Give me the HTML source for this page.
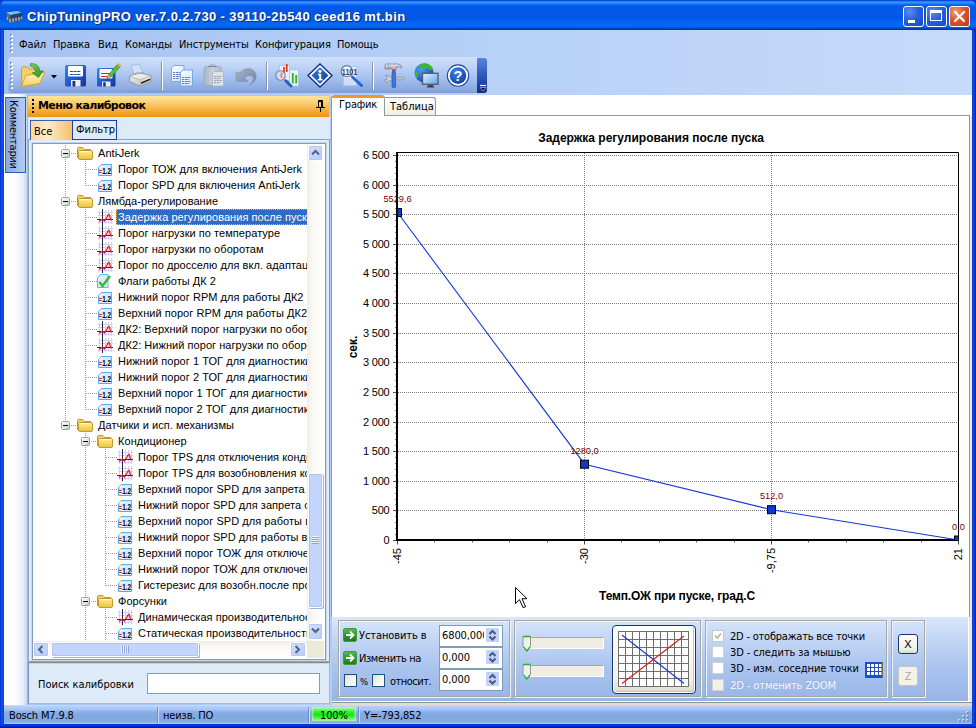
<!DOCTYPE html>
<html lang="ru"><head><meta charset="utf-8"><title>ChipTuningPRO</title>
<style>
*{box-sizing:border-box;margin:0;padding:0}
html,body{width:976px;height:728px;overflow:hidden}
body{position:relative;background:#0937dc;font-family:"Liberation Sans","DejaVu Sans",sans-serif;font-size:11px;color:#000}
.a{position:absolute}
.t{position:absolute;white-space:nowrap;line-height:1}
#titlebar{left:0;top:0;width:976px;height:30px;background:linear-gradient(to bottom,#0a48d4 0%,#0a4cd8 3%,#3b97ff 6%,#2f8cfd 10%,#0a6df6 15%,#0359e7 21%,#0256e4 60%,#035ff0 70%,#0568f6 80%,#0565f2 89%,#0452dc 93%,#033cbc 96%,#022f9f 100%);border-radius:7px 7px 0 0}
#title{left:27px;top:10px;font-family:"Liberation Sans",sans-serif;font-weight:bold;font-size:13px;color:#fff;text-shadow:1px 1px 1px #0a2a80;letter-spacing:0.37px}
#client{left:4px;top:30px;width:968px;height:694px;background:linear-gradient(to right,#a4c2f2 0%,#b4cef6 40%,#c6dbf9 100%)}
.wb{position:absolute;top:6px;width:21px;height:21px;border:1px solid #fff;border-radius:3px;background:radial-gradient(circle at 30% 25%,#5c8cf5 0%,#2a5fe0 45%,#1a46c4 100%)}
.wb.c{background:radial-gradient(circle at 30% 25%,#f0a080 0%,#e05a30 40%,#c2330f 100%)}
</style></head><body>
<div id="titlebar" class="a"></div>
<svg class="a" style="left:5px;top:10px" width="18" height="14" viewBox="0 0 18 14">
<defs><linearGradient id="chg" x1="0" y1="0" x2="1" y2="1"><stop offset="0" stop-color="#e8f6ff"/><stop offset=".45" stop-color="#7cc0f0"/><stop offset="1" stop-color="#2f86d8"/></linearGradient></defs>
<path d="M1.500 3L13 1.500 17 3.500V7L5.500 9 1.500 6.500z" fill="#1b2b4a"/>
<path d="M1.500 2.500L13 1 17 3 5.500 5.200z" fill="url(#chg)"/>
<path d="M1.500 2.500L5.500 5.200V8.500L1.500 6z" fill="#3d78c0"/>
<path d="M5.500 5.200L17 3V6.500L5.500 8.500z" fill="#22406e"/>
<path d="M2.500 6.500v3.500M5 8.500v4M8 8v4M11 7.500v3.500M14 7v3.500M16.500 6.500v2.500" stroke="#f0a01c" stroke-width="1.500"/>
</svg>
<div id="title" class="t">ChipTuningPRO ver.7.0.2.730 - 39110-2b540 ceed16 mt.bin</div>
<div class="wb" style="left:903px"><div class="a" style="left:4px;top:13px;width:7px;height:3px;background:#fff"></div></div>
<div class="wb" style="left:926px"><div class="a" style="left:3px;top:3px;width:12px;height:11px;border:1px solid #fff;border-top-width:3px"></div></div>
<div class="wb c" style="left:949px"><svg class="a" style="left:0;top:0" width="19" height="19"><path d="M5 5L14 14M14 5L5 14" stroke="#fff" stroke-width="2.2" stroke-linecap="round"/></svg></div>
<div class="a" style="left:0;top:30px;width:4px;height:698px;background:linear-gradient(to right,#0a2ac4 0%,#0a4fe8 35%,#0a4ce6 70%,#0a3cd6 100%)"></div>
<div class="a" style="left:972px;top:30px;width:4px;height:698px;background:linear-gradient(to right,#0a3cd6 0%,#0a48e2 40%,#0a30c8 75%,#001a9c 100%)"></div>
<div class="a" style="left:0;top:724px;width:976px;height:4px;background:linear-gradient(to bottom,#0a3ce2 0%,#0a34d6 40%,#0522b0 75%,#00108a 100%)"></div>
<div id="client" class="a"></div>
<style>
.grip{position:absolute;width:3px}
.grip i{position:absolute;left:0;width:2px;height:2px;background:#fff;box-shadow:-1px -1px 0 #6a8ccc}
.mi{top:39px;font-size:11px;color:#000;font-family:"DejaVu Sans Condensed","Liberation Sans",sans-serif;letter-spacing:-0.1px}
#tbar{left:8px;top:57px;width:469px;height:36px;border-radius:4px 0 0 4px;background:linear-gradient(to bottom,#cfe0fa 0%,#bcd2f6 30%,#a3bfee 60%,#8daae2 88%,#7f9cd8 100%)}
#tbend{left:477px;top:58px;width:10px;height:35px;border-radius:0 3px 3px 0;background:linear-gradient(to bottom,#5b84dc 0%,#2f57b8 50%,#0f2f8c 100%)}
.sep{position:absolute;top:62px;width:1px;height:28px;background:#8f91a4;box-shadow:1px 0 0 #fdfdfb}
.ic{position:absolute}
</style>
<!-- menu grip -->
<div class="grip" style="left:11px;top:34px;height:22px"><i style="top:1px"></i><i style="top:5px"></i><i style="top:9px"></i><i style="top:13px"></i><i style="top:17px"></i></div>
<div class="t mi" style="left:19px">Файл</div>
<div class="t mi" style="left:53px">Правка</div>
<div class="t mi" style="left:98px">Вид</div>
<div class="t mi" style="left:125px">Команды</div>
<div class="t mi" style="left:179px">Инструменты</div>
<div class="t mi" style="left:255px">Конфигурация</div>
<div class="t mi" style="left:337px">Помощь</div>
<div id="tbar" class="a"></div><div id="tbend" class="a"></div>
<div class="grip" style="left:11px;top:62px;height:28px"><i style="top:1px"></i><i style="top:5px"></i><i style="top:9px"></i><i style="top:13px"></i><i style="top:17px"></i><i style="top:21px"></i><i style="top:25px"></i></div>
<div class="sep" style="left:161px"></div><div class="sep" style="left:266px"></div><div class="sep" style="left:372px"></div>
<!-- TOOLBAR ICONS -->
<!--ICONS-->
<!-- open -->
<svg class="ic" style="left:20px;top:63px" width="26" height="25" viewBox="20 63 26 25">
<defs><linearGradient id="fo1" x1="0" y1="0" x2="0" y2="1"><stop offset="0" stop-color="#fdf3b8"/><stop offset="1" stop-color="#f5d26a"/></linearGradient>
<linearGradient id="ga1" x1="0" y1="0" x2="1" y2="1"><stop offset="0" stop-color="#7fd862"/><stop offset="1" stop-color="#1f8f1a"/></linearGradient></defs>
<path d="M21.500 86V68.500q0-1.500 1.500-1.500h5l1.800 2.300H38v5" fill="#f4cf6a" stroke="#d99a22" stroke-width="1"/>
<path d="M21.500 86.500L25.500 75.500 44.500 72 40 83.500z" fill="url(#fo1)" stroke="#e0a024" stroke-width="1"/>
<path d="M30.500 63.800c5.500-.8 8.800 2.500 9.300 7.600l3.400-.6-4.800 6.700-6-4.700 3.400-.6c-.4-3.400-2.300-5.600-5.300-6.200z" fill="url(#ga1)" stroke="#1c7d18" stroke-width=".7"/>
</svg>
<svg class="ic" style="left:51px;top:75px" width="6" height="4"><path d="M0 0h6L3 3.500z" fill="#000"/></svg>
<!-- save -->
<svg class="ic" style="left:64px;top:63px" width="24" height="25" viewBox="64 63 24 25">
<defs><linearGradient id="sv1" x1="0" y1="0" x2="1" y2="1"><stop offset="0" stop-color="#3a86ee"/><stop offset=".5" stop-color="#1f5bd0"/><stop offset="1" stop-color="#16348e"/></linearGradient></defs>
<rect x="65" y="65" width="21" height="21.500" rx="1.800" fill="url(#sv1)"/>
<rect x="68" y="66" width="15" height="10.500" rx="1.200" fill="#fff"/>
<path d="M70 71.500h11M70 74.500h11" stroke="#27479a" stroke-width="1" stroke-dasharray="3 .6"/>
<rect x="71" y="80" width="9.500" height="6.500" fill="#e9edf8"/>
<rect x="72.500" y="81" width="2.800" height="5.500" fill="#1d2f80"/>
</svg>
<!-- save edit -->
<svg class="ic" style="left:96px;top:63px" width="26" height="25" viewBox="96 63 26 25">
<rect x="97" y="68" width="18.500" height="18.500" rx="1.600" fill="url(#sv1)"/>
<rect x="99.500" y="69" width="13" height="9.500" rx="1" fill="#fff"/>
<path d="M101 73.500h9.500M101 76.500h9.500" stroke="#e2241c" stroke-width="1.200"/>
<rect x="102" y="81.500" width="8.500" height="5" fill="#e9edf8"/>
<rect x="103.200" y="82.300" width="2.500" height="4.200" fill="#1d2f80"/>
<path d="M108.300 74.800L117 64.800l2.800 2.300L111 77.200z" fill="#4cc238" stroke="#2a8a20" stroke-width=".6"/>
<path d="M117 64.800l1.300-1.400 2.800 2.300-1.300 1.400z" fill="#f4ae34" stroke="#c9821a" stroke-width=".4"/>
<path d="M108.300 74.800l-1.300 3.600 4-1.200z" fill="#f0cc90" stroke="#8a6a3a" stroke-width=".4"/>
<path d="M107 78.400l.5-1.400 1 .9z" fill="#222"/>
</svg>
<!-- print -->
<svg class="ic" style="left:128px;top:63px" width="25" height="25" viewBox="128 63 25 25">
<defs><linearGradient id="pr1" x1="0" y1="0" x2="0" y2="1"><stop offset="0" stop-color="#f6f6f4"/><stop offset="1" stop-color="#c9c9c4"/></linearGradient></defs>
<path d="M131 65.200l8.500-.9 3.700 8.400-9 2.300z" fill="#cfe1f9" stroke="#8fb0e0" stroke-width=".7"/>
<path d="M129.500 76.200l8-3.600 13.500 3v5.600l-11 5-10.500-4.600z" fill="url(#pr1)" stroke="#8b8b86" stroke-width=".8"/>
<path d="M129.500 76.200l10.500 4 11-4.600M140 80.200v6" fill="none" stroke="#a9a9a4" stroke-width=".7"/>
<path d="M134.500 74.700l9-2.200" stroke="#9a9a95" stroke-width=".8"/>
<path d="M141 82.300l9.300-3.900v1.600L141 84z" fill="#1c1c1c"/>
</svg>
<!-- copy -->
<svg class="ic" style="left:170px;top:63px" width="24" height="25" viewBox="170 63 24 25">
<defs><linearGradient id="cp1" x1="0" y1="0" x2="1" y2="1"><stop offset="0" stop-color="#fff"/><stop offset="1" stop-color="#cfe2fa"/></linearGradient></defs>
<path d="M171.500 68l2.500-2.500h10v16h-12.500z" fill="url(#cp1)" stroke="#78a8e6" stroke-width="1"/>
<path d="M173 72.500h8M173 74.500h7M173 76.500h8M173 78.500h6" stroke="#4462b0" stroke-width=".8" stroke-dasharray="2 .7 3 .5"/>
<path d="M180.500 72.500l2.500-2.500h9.500v16h-12z" fill="url(#cp1)" stroke="#78a8e6" stroke-width="1"/>
<path d="M182 77.500h9M182 79.500h7M182 81.500h9M182 83.500h7" stroke="#4462b0" stroke-width=".8" stroke-dasharray="2 .7 3 .5"/>
</svg>
<!-- paste (disabled) -->
<svg class="ic" style="left:202px;top:63px" width="24" height="25" viewBox="202 63 24 25">
<defs><linearGradient id="ps1" x1="0" y1="0" x2="1" y2="0"><stop offset="0" stop-color="#aab4c6"/><stop offset=".5" stop-color="#c9d0dc"/><stop offset="1" stop-color="#b4bccb"/></linearGradient></defs>
<path d="M204 68.500q0-2 2-2h2.500q1-2 4-2t4 2H219q2 0 2 2V85.500H204z" fill="url(#ps1)" stroke="#98a3b8" stroke-width=".7"/>
<path d="M208.500 66.500h8" stroke="#7f8ba3" stroke-width="1.200"/>
<path d="M212.500 73.500l2-2h9v14.500h-11z" fill="#dde1e9" stroke="#a9b2c3" stroke-width=".8"/>
<path d="M214 76.500h8M214 78.500h6.500M214 80.500h8M214 82.500h6.500" stroke="#9aa5b8" stroke-width="1" stroke-dasharray="2 .6 3 .5"/>
</svg>
<!-- undo (disabled) -->
<svg class="ic" style="left:234px;top:63px" width="24" height="25" viewBox="234 63 24 25">
<defs><linearGradient id="un1" x1="0" y1="0" x2="1" y2="1"><stop offset="0" stop-color="#aab6c8"/><stop offset=".6" stop-color="#8594ac"/><stop offset="1" stop-color="#6f8098"/></linearGradient></defs>
<path d="M236 72v9.500h12l-3.600-3.500c3-3 7-3 8.500-.5 1.300 2.300-.5 5-3.400 7.500 5.500-2.500 8-7.500 6-12-2.300-5-10-6.500-15.500 -.5z" fill="url(#un1)" stroke="#7d8ca6" stroke-width=".5"/>
</svg>
<!-- chart zoom -->
<svg class="ic" style="left:274px;top:63px" width="26" height="25" viewBox="274 63 26 25">
<rect x="279.500" y="65.500" width="10" height="15" fill="#eaf1fb" stroke="#a9c2e6" stroke-width=".8"/>
<rect x="289.500" y="70" width="9" height="16" fill="#eef4fc" stroke="#a9c2e6" stroke-width=".8"/>
<path d="M284 73v-6M286.800 72v-8" stroke="#e63a1e" stroke-width="1.700"/>
<path d="M292.800 83.500V73M296.200 83.500V75" stroke="#35b428" stroke-width="1.900"/>
<circle cx="280.500" cy="75.500" r="4.700" fill="#dfe7f3" fill-opacity=".7" stroke="#6f82a6" stroke-width="1.100"/>
<path d="M281.500 72.500v5.500" stroke="#e2705c" stroke-width="2.200" opacity=".75"/>
<path d="M284.500 79.500l1.500 1.500" stroke="#e05030" stroke-width="2"/>
<path d="M286 81l5 5" stroke="#1f62cc" stroke-width="3" stroke-linecap="round"/>
</svg>
<!-- info -->
<svg class="ic" style="left:307px;top:63px" width="26" height="25" viewBox="307 63 26 25">
<defs><linearGradient id="in1" x1="0" y1="0" x2="1" y2="1"><stop offset="0" stop-color="#2f7ae0"/><stop offset="1" stop-color="#123f9c"/></linearGradient></defs>
<path d="M320 64L332 75.500 320 87 308 75.500z" fill="#fff" stroke="#152f86" stroke-width="1.400"/>
<path d="M320 67.300L328.500 75.500 320 83.700 311.500 75.500z" fill="url(#in1)"/>
<circle cx="320" cy="71.300" r="1.600" fill="#fff"/>
<path d="M318 73.800h3.200v5.300h1.300v1.400h-4.800v-1.400h1.500v-3.900H318z" fill="#fff"/>
</svg>
<!-- binary zoom -->
<svg class="ic" style="left:339px;top:63px" width="26" height="25" viewBox="339 63 26 25">
<rect x="343.500" y="66.500" width="13" height="19" fill="#e8f0fb" stroke="#a9c2e6" stroke-width=".8"/>
<rect x="344" y="78" width="12" height="7" fill="#d0ddf3"/>
<circle cx="346.800" cy="71.200" r="5.600" fill="#eef3fb" fill-opacity=".85" stroke="#62749e" stroke-width="1.100"/>
<text x="341.800" y="74.600" font-family="Liberation Sans,sans-serif" font-size="9" font-weight="bold" fill="#34446f" textLength="15.500" lengthAdjust="spacingAndGlyphs">1101</text>
<path d="M351.200 75.800l1.600 1.500" stroke="#e24a2c" stroke-width="2.300"/>
<path d="M353 77.500l8.500 8" stroke="#1f6ad2" stroke-width="3" stroke-linecap="round"/>
</svg>
<!-- tools -->
<svg class="ic" style="left:382px;top:63px" width="24" height="25" viewBox="382 63 24 25">
<defs><linearGradient id="tl1" x1="0" y1="0" x2="0" y2="1"><stop offset="0" stop-color="#eceef2"/><stop offset="1" stop-color="#9aa0ae"/></linearGradient></defs>
<path d="M385 65.500q0-1.500 1.500-1.500H397c2.500 0 4.200 1 5 3.200l-1.200.8c-1.200-1.300-2.500-1.600-4-1.300l-1 3h-4l-.8-2H390v1.300h-5z" fill="url(#tl1)" stroke="#6d7486" stroke-width=".7"/>
<path d="M388.500 64v5" stroke="#8a90a0" stroke-width=".7"/>
<rect x="392" y="69.700" width="3.600" height="2.300" fill="#e23a2a"/>
<rect x="392" y="72" width="3.600" height="15.500" rx="1" fill="#3a7ada" stroke="#1d4c9e" stroke-width=".6"/>
<path d="M396.200 77.200h7.300q1.200 0 1.200 1.300t-1.200 1.300h-7.300z" fill="#c4c8d0" stroke="#7d8392" stroke-width=".6"/>
<path d="M391.500 77h-1.800c-.6-1.400-2.300-2-4.200-1.600l1.900 2-.5 2.200-2.600.5c.8 1.800 3.400 2.200 5.200.4h2z" fill="#d3d6dd" stroke="#7d8392" stroke-width=".7"/>
</svg>
<!-- globe + monitor -->
<svg class="ic" style="left:413px;top:62px" width="27" height="27" viewBox="413 62 27 27">
<defs><radialGradient id="gl1" cx=".35" cy=".3" r=".8"><stop offset="0" stop-color="#4f9cf2"/><stop offset="1" stop-color="#1245b8"/></radialGradient>
<linearGradient id="mn1" x1="0" y1="0" x2="1" y2="1"><stop offset="0" stop-color="#e4f2fe"/><stop offset="1" stop-color="#5aa6ee"/></linearGradient></defs>
<circle cx="424" cy="72.800" r="9.500" fill="url(#gl1)"/>
<path d="M418.500 66c2.500-2 5.500-2.800 8.500-2.200 3 .8 5.200 2.800 6.300 5.500l-3.500 1-2.300-2.500-2.700 1.500-2.500-1.800-2.500 1z" fill="#3ab82f"/>
<path d="M415 70.500c1.800.3 3 1.600 3.300 3.300.3 1.800-.8 3-1.300 4.700-1.500-2-2.600-5-2-8z" fill="#3ab82f"/>
<rect x="422.500" y="73.300" width="15.500" height="11" fill="url(#mn1)" stroke="#5a5e68" stroke-width="1.400"/>
<path d="M426.500 87.500h8l-1.800-2.600h-4.400z" fill="#3c404a"/>
</svg>
<!-- help -->
<svg class="ic" style="left:446px;top:63px" width="25" height="25" viewBox="446 63 25 25">
<defs><radialGradient id="hp1" cx=".4" cy=".3" r=".8"><stop offset="0" stop-color="#3a86ea"/><stop offset="1" stop-color="#0f3a9a"/></radialGradient></defs>
<circle cx="458" cy="75.600" r="10.700" fill="#fff" stroke="#1a47a6" stroke-width="1.100"/>
<circle cx="458" cy="75.600" r="8.300" fill="url(#hp1)"/>
<text x="458" y="80.800" text-anchor="middle" font-family="Liberation Sans,sans-serif" font-weight="bold" font-size="14.500" fill="#fff">?</text>
</svg>
<!-- toolbar end chevron -->
<svg class="ic" style="left:479px;top:84px" width="8" height="8"><path d="M1 1.500h6" stroke="#fff" stroke-width="1.200"/><path d="M1.500 3.500h5.500L4.200 7z" fill="#000" stroke="#fff" stroke-width=".5"/></svg>
<style>
#vtab{left:5px;top:97px;width:21px;height:76px;background:linear-gradient(to right,#89a8e0,#b5cbf2);border:1px solid #2a56c0;border-left:1px solid #3a66d0}
#vtabtxt{left:8px;top:100px;writing-mode:vertical-rl;font-size:11px;font-family:"DejaVu Sans Condensed","Liberation Sans",sans-serif;letter-spacing:-0.25px}
#lgut{left:4px;top:174px;width:24px;height:531px;background:linear-gradient(to right,#fff 0%,#fff 45%,#e6eefa 78%,#c6d9f5 95%,#7c9cd8 100%)}
#lgut0{left:4px;top:94px;width:24px;height:80px;background:linear-gradient(to right,#fff 0%,#fff 45%,#e6eefa 78%,#c6d9f5 95%,#7c9cd8 100%)}
#phead{left:28px;top:96px;width:301px;height:21px;background:linear-gradient(to bottom,#fde59a 0%,#fbd278 28%,#f6b548 60%,#f09c1e 88%,#ee940f 100%)}
#pheadt{left:38px;top:100px;font-weight:bold;font-size:11px;font-family:"DejaVu Sans","Liberation Sans",sans-serif;letter-spacing:-0.6px}
#pbody{left:28px;top:117px;width:302px;height:546px;background:#dcebf7}
#tabAll{left:30px;top:120px;width:42px;height:20px;background:linear-gradient(to right,#fbd999 0%,#fdeccb 40%,#f6c06a 100%);border:1px solid #3d5cb8;border-bottom:none;border-right:none}
#tabF{left:72px;top:120px;width:45px;height:20px;background:#dcebf7;border:1px solid #1c3fa8}
#treeout{left:28px;top:139px;width:302px;height:523px;border:1px solid #8aa6c6;border-right:1px solid #7f9db9;background:#e3eefa}
#treein{left:32px;top:143px;width:294px;height:517px;border:1px solid #7f9db9;background:#fff;box-shadow:0 0 0 1px #c5d8ef}
#tree{left:33px;top:145px;width:274px;height:496px;overflow:hidden}
.tr{position:absolute;height:16px;line-height:17px;padding:0 2px;white-space:nowrap;font-size:11px;font-family:"Liberation Sans",sans-serif;letter-spacing:0.05px}
.tr.sel{background:#316ac5;color:#fff;outline:1px dotted #e8b060;outline-offset:-1px;width:300px}
.ti{position:absolute}
.pm{position:absolute;width:9px;height:9px;border:1px solid #8da0bb;border-radius:1.500px;background:linear-gradient(135deg,#fff 0%,#e4e4dc 60%,#c3c1b4 100%)}
.pm:after{content:"";position:absolute;left:1px;top:3px;width:5px;height:1px;background:#000}
.vl{position:absolute;width:1px;background:repeating-linear-gradient(to bottom,#9c9c9c 0 1px,transparent 1px 2px)}
.hl{position:absolute;height:1px;background:repeating-linear-gradient(to right,#9c9c9c 0 1px,transparent 1px 2px)}
.sbtn{position:absolute;width:15px;height:15px;border:1px solid #fff;border-radius:2px;background:linear-gradient(135deg,#d3e0fd,#b7cbf8);box-shadow:0 0 0 1px #b4c8f6 inset}
#vtrack{left:307px;top:145px;width:17px;height:496px;background:linear-gradient(to right,#efede4,#fbfaf6 40%,#fefefb)}
#htrack{left:33px;top:641px;width:274px;height:17px;background:linear-gradient(to bottom,#efede4,#fbfaf6 40%,#fefefb)}
#corner{left:307px;top:641px;width:17px;height:17px;background:#ece9d8}
.thumb{position:absolute;border:1px solid #fff;border-radius:2px;background:#c3d5fd;box-shadow:0 0 0 1px #b0c4f2 inset,1px 1px 0 #9db2e0}
#search{left:28px;top:662px;width:302px;height:42px;background:#dcebf7;border:1px solid #c4b69a;border-top:1px solid #8c8c84;border-left:1px solid #7a94c4;box-shadow:inset 0 1px 0 #c9d3dc}
</style>
<div id="lgut0" class="a"></div><div id="lgut" class="a"></div>
<div id="vtab" class="a"></div><div id="vtabtxt" class="t">Комментарии</div>
<div id="phead" class="a"></div>
<div class="grip" style="left:32px;top:99px;height:16px"><i style="top:0;background:#000;box-shadow:none"></i><i style="top:4px;background:#000;box-shadow:none"></i><i style="top:8px;background:#000;box-shadow:none"></i><i style="top:12px;background:#000;box-shadow:none"></i></div>
<div id="pheadt" class="t">Меню калибровок</div>
<svg class="a" style="left:315px;top:99px" width="11" height="14"><path d="M3.500 8.500V1.500h4v7M1 8.500h9M5.500 9v4" stroke="#000" stroke-width="1" fill="none"/><path d="M6.500 2v6M4 2.500h3" stroke="#000" stroke-width="1"/></svg>
<div id="pbody" class="a"></div>
<div id="treeout" class="a"></div>
<div id="tabAll" class="a"></div><div class="t" style="left:34px;top:126px;font-size:11px;font-family:'DejaVu Sans Condensed','Liberation Sans',sans-serif">Все</div>
<div id="tabF" class="a"></div><div class="t" style="left:76px;top:124px;font-size:11px;font-family:'DejaVu Sans Condensed','Liberation Sans',sans-serif">Фильтр</div>
<div id="treein" class="a"></div>
<svg width="0" height="0" style="position:absolute"><defs>
<linearGradient id="gf" x1="0" y1="0" x2="0" y2="1"><stop offset="0" stop-color="#fdee9c"/><stop offset="1" stop-color="#eac23c"/></linearGradient>
</defs></svg>
<div id="tree" class="a">
<div class="vl" style="left:32px;top:0;height:281px"></div>
<div class="vl" style="left:52px;top:16px;height:25px"></div>
<div class="vl" style="left:52px;top:64px;height:201px"></div>
<div class="vl" style="left:52px;top:288px;height:208px"></div>
<div class="vl" style="left:72px;top:304px;height:137px"></div>
<div class="vl" style="left:72px;top:464px;height:32px"></div>
<div class="hl" style="left:38px;top:8px;width:6px"></div>
<div class="hl" style="left:38px;top:56px;width:6px"></div>
<div class="hl" style="left:38px;top:280px;width:6px"></div>
<div class="hl" style="left:53px;top:24px;width:11px"></div>
<div class="hl" style="left:53px;top:40px;width:11px"></div>
<div class="hl" style="left:53px;top:72px;width:11px"></div>
<div class="hl" style="left:53px;top:88px;width:11px"></div>
<div class="hl" style="left:53px;top:104px;width:11px"></div>
<div class="hl" style="left:53px;top:120px;width:11px"></div>
<div class="hl" style="left:53px;top:136px;width:11px"></div>
<div class="hl" style="left:53px;top:152px;width:11px"></div>
<div class="hl" style="left:53px;top:168px;width:11px"></div>
<div class="hl" style="left:53px;top:184px;width:11px"></div>
<div class="hl" style="left:53px;top:200px;width:11px"></div>
<div class="hl" style="left:53px;top:216px;width:11px"></div>
<div class="hl" style="left:53px;top:232px;width:11px"></div>
<div class="hl" style="left:53px;top:248px;width:11px"></div>
<div class="hl" style="left:53px;top:264px;width:11px"></div>
<div class="hl" style="left:58px;top:296px;width:6px"></div>
<div class="hl" style="left:58px;top:456px;width:6px"></div>
<div class="hl" style="left:73px;top:312px;width:11px"></div>
<div class="hl" style="left:73px;top:328px;width:11px"></div>
<div class="hl" style="left:73px;top:344px;width:11px"></div>
<div class="hl" style="left:73px;top:360px;width:11px"></div>
<div class="hl" style="left:73px;top:376px;width:11px"></div>
<div class="hl" style="left:73px;top:392px;width:11px"></div>
<div class="hl" style="left:73px;top:408px;width:11px"></div>
<div class="hl" style="left:73px;top:424px;width:11px"></div>
<div class="hl" style="left:73px;top:440px;width:11px"></div>
<div class="hl" style="left:73px;top:472px;width:11px"></div>
<div class="hl" style="left:73px;top:488px;width:11px"></div>
<i class="pm" style="left:28px;top:4px"></i>
<svg class="ti" style="left:44px;top:2px" width="17" height="14"><path d="M.5 11V1.800q0-1.300 1.300-1.300h3.400q1 0 1.600 1l.7 1h5.500q1 0 1 1v1" fill="#f2d35c" stroke="#c49a22" stroke-width="1"/><rect x="1.500" y="3.500" width="14" height="9" rx="1.300" fill="url(#gf)" stroke="#c49a22"/><path d="M2.500 4.500h12" stroke="#fff6c4" stroke-width="1"/></svg>
<div class="tr" id="r1" style="left:63px;top:0px">Anti<span style="margin:0 -1px 0 -1.200px">-</span>Jerk</div>
<svg class="ti" style="left:65px;top:19px" width="14" height="12"><path d="M3.500 .5h10v11h-13v-8z" fill="#d9ecfd" stroke="#55acf2"/><path d="M1 3.500h2.500v-2.500z" fill="#fff"/><path d="M1 6.500h2.700M1 8.500h2.700" stroke="#f01c10" stroke-width="1"/><text x="4.300" y="9.600" font-family="Liberation Sans,sans-serif" font-weight="bold" font-size="8.800" fill="#000" textLength="8.800" lengthAdjust="spacingAndGlyphs">1.2</text></svg>
<div class="tr" id="r2" style="left:83px;top:16px">Порог ТОЖ для включения Anti<span style="margin:0 -1px 0 -1.200px">-</span>Jerk</div>
<svg class="ti" style="left:65px;top:35px" width="14" height="12"><path d="M3.500 .5h10v11h-13v-8z" fill="#d9ecfd" stroke="#55acf2"/><path d="M1 3.500h2.500v-2.500z" fill="#fff"/><path d="M1 6.500h2.700M1 8.500h2.700" stroke="#f01c10" stroke-width="1"/><text x="4.300" y="9.600" font-family="Liberation Sans,sans-serif" font-weight="bold" font-size="8.800" fill="#000" textLength="8.800" lengthAdjust="spacingAndGlyphs">1.2</text></svg>
<div class="tr" id="r3" style="left:83px;top:32px">Порог SPD для включения Anti<span style="margin:0 -1px 0 -1.200px">-</span>Jerk</div>
<i class="pm" style="left:28px;top:52px"></i>
<svg class="ti" style="left:44px;top:50px" width="17" height="14"><path d="M.5 11V1.800q0-1.300 1.300-1.300h3.400q1 0 1.600 1l.7 1h5.500q1 0 1 1v1" fill="#f2d35c" stroke="#c49a22" stroke-width="1"/><rect x="1.500" y="3.500" width="14" height="9" rx="1.300" fill="url(#gf)" stroke="#c49a22"/><path d="M2.500 4.500h12" stroke="#fff6c4" stroke-width="1"/></svg>
<div class="tr" id="r4" style="left:63px;top:48px">Лямбда-регулирование</div>
<svg class="ti" style="left:64px;top:64px" width="16" height="16"><path d="M2.500 1v14M8.500 1v14M11.500 1v14M14.500 1v14M1 3.500h15M1 6.500h15M1 13.500h15" stroke="#d6ccf5" stroke-width="1"/><path d="M5.500 0v16M0 10.500h16" stroke="#26265e" stroke-width="1"/><path d="M2 12.500L5.500 10l2 2L10 8c1-2.500 2-3.500 2.500-1.500L14 11.500" fill="none" stroke="#f01c10" stroke-width="1.300"/></svg>
<div class="tr sel" id="r5" style="left:83px;top:64px">Задержка регулирования после пуска</div>
<svg class="ti" style="left:64px;top:80px" width="16" height="16"><path d="M2.500 1v14M8.500 1v14M11.500 1v14M14.500 1v14M1 3.500h15M1 6.500h15M1 13.500h15" stroke="#d6ccf5" stroke-width="1"/><path d="M5.500 0v16M0 10.500h16" stroke="#26265e" stroke-width="1"/><path d="M2 12.500L5.500 10l2 2L10 8c1-2.500 2-3.500 2.500-1.500L14 11.500" fill="none" stroke="#f01c10" stroke-width="1.300"/></svg>
<div class="tr" id="r6" style="left:83px;top:80px">Порог нагрузки по температуре</div>
<svg class="ti" style="left:64px;top:96px" width="16" height="16"><path d="M2.500 1v14M8.500 1v14M11.500 1v14M14.500 1v14M1 3.500h15M1 6.500h15M1 13.500h15" stroke="#d6ccf5" stroke-width="1"/><path d="M5.500 0v16M0 10.500h16" stroke="#26265e" stroke-width="1"/><path d="M2 12.500L5.500 10l2 2L10 8c1-2.500 2-3.500 2.500-1.500L14 11.500" fill="none" stroke="#f01c10" stroke-width="1.300"/></svg>
<div class="tr" id="r7" style="left:83px;top:96px">Порог нагрузки по оборотам</div>
<svg class="ti" style="left:64px;top:112px" width="16" height="16"><path d="M2.500 1v14M8.500 1v14M11.500 1v14M14.500 1v14M1 3.500h15M1 6.500h15M1 13.500h15" stroke="#d6ccf5" stroke-width="1"/><path d="M5.500 0v16M0 10.500h16" stroke="#26265e" stroke-width="1"/><path d="M2 12.500L5.500 10l2 2L10 8c1-2.500 2-3.500 2.500-1.500L14 11.500" fill="none" stroke="#f01c10" stroke-width="1.300"/></svg>
<div class="tr" id="r8" style="left:83px;top:112px">Порог по дросселю для вкл. адаптации</div>
<svg class="ti" style="left:64px;top:128px" width="15" height="16"><path d="M3.500 1.500h7.500v13h-10.500v-10z" fill="#d9ecfd" stroke="#62b4f4"/><path d="M2.500 9l3 4L13 3" fill="none" stroke="#38b82c" stroke-width="2.400"/></svg>
<div class="tr" id="r9" style="left:83px;top:128px">Флаги работы ДК 2</div>
<svg class="ti" style="left:65px;top:147px" width="14" height="12"><path d="M3.500 .5h10v11h-13v-8z" fill="#d9ecfd" stroke="#55acf2"/><path d="M1 3.500h2.500v-2.500z" fill="#fff"/><path d="M1 6.500h2.700M1 8.500h2.700" stroke="#f01c10" stroke-width="1"/><text x="4.300" y="9.600" font-family="Liberation Sans,sans-serif" font-weight="bold" font-size="8.800" fill="#000" textLength="8.800" lengthAdjust="spacingAndGlyphs">1.2</text></svg>
<div class="tr" id="r10" style="left:83px;top:144px">Нижний порог RPM для работы ДК2</div>
<svg class="ti" style="left:65px;top:163px" width="14" height="12"><path d="M3.500 .5h10v11h-13v-8z" fill="#d9ecfd" stroke="#55acf2"/><path d="M1 3.500h2.500v-2.500z" fill="#fff"/><path d="M1 6.500h2.700M1 8.500h2.700" stroke="#f01c10" stroke-width="1"/><text x="4.300" y="9.600" font-family="Liberation Sans,sans-serif" font-weight="bold" font-size="8.800" fill="#000" textLength="8.800" lengthAdjust="spacingAndGlyphs">1.2</text></svg>
<div class="tr" id="r11" style="left:83px;top:160px">Верхний порог RPM для работы ДК2</div>
<svg class="ti" style="left:64px;top:176px" width="16" height="16"><path d="M2.500 1v14M8.500 1v14M11.500 1v14M14.500 1v14M1 3.500h15M1 6.500h15M1 13.500h15" stroke="#d6ccf5" stroke-width="1"/><path d="M5.500 0v16M0 10.500h16" stroke="#26265e" stroke-width="1"/><path d="M2 12.500L5.500 10l2 2L10 8c1-2.500 2-3.500 2.500-1.500L14 11.500" fill="none" stroke="#f01c10" stroke-width="1.300"/></svg>
<div class="tr" id="r12" style="left:83px;top:176px">ДК2: Верхний порог нагрузки по оборотам</div>
<svg class="ti" style="left:64px;top:192px" width="16" height="16"><path d="M2.500 1v14M8.500 1v14M11.500 1v14M14.500 1v14M1 3.500h15M1 6.500h15M1 13.500h15" stroke="#d6ccf5" stroke-width="1"/><path d="M5.500 0v16M0 10.500h16" stroke="#26265e" stroke-width="1"/><path d="M2 12.500L5.500 10l2 2L10 8c1-2.500 2-3.500 2.500-1.500L14 11.500" fill="none" stroke="#f01c10" stroke-width="1.300"/></svg>
<div class="tr" id="r13" style="left:83px;top:192px">ДК2: Нижний порог нагрузки по оборотам</div>
<svg class="ti" style="left:65px;top:211px" width="14" height="12"><path d="M3.500 .5h10v11h-13v-8z" fill="#d9ecfd" stroke="#55acf2"/><path d="M1 3.500h2.500v-2.500z" fill="#fff"/><path d="M1 6.500h2.700M1 8.500h2.700" stroke="#f01c10" stroke-width="1"/><text x="4.300" y="9.600" font-family="Liberation Sans,sans-serif" font-weight="bold" font-size="8.800" fill="#000" textLength="8.800" lengthAdjust="spacingAndGlyphs">1.2</text></svg>
<div class="tr" id="r14" style="left:83px;top:208px">Нижний порог 1 ТОГ для диагностики</div>
<svg class="ti" style="left:65px;top:227px" width="14" height="12"><path d="M3.500 .5h10v11h-13v-8z" fill="#d9ecfd" stroke="#55acf2"/><path d="M1 3.500h2.500v-2.500z" fill="#fff"/><path d="M1 6.500h2.700M1 8.500h2.700" stroke="#f01c10" stroke-width="1"/><text x="4.300" y="9.600" font-family="Liberation Sans,sans-serif" font-weight="bold" font-size="8.800" fill="#000" textLength="8.800" lengthAdjust="spacingAndGlyphs">1.2</text></svg>
<div class="tr" id="r15" style="left:83px;top:224px">Нижний порог 2 ТОГ для диагностики</div>
<svg class="ti" style="left:65px;top:243px" width="14" height="12"><path d="M3.500 .5h10v11h-13v-8z" fill="#d9ecfd" stroke="#55acf2"/><path d="M1 3.500h2.500v-2.500z" fill="#fff"/><path d="M1 6.500h2.700M1 8.500h2.700" stroke="#f01c10" stroke-width="1"/><text x="4.300" y="9.600" font-family="Liberation Sans,sans-serif" font-weight="bold" font-size="8.800" fill="#000" textLength="8.800" lengthAdjust="spacingAndGlyphs">1.2</text></svg>
<div class="tr" id="r16" style="left:83px;top:240px">Верхний порог 1 ТОГ для диагностики</div>
<svg class="ti" style="left:65px;top:259px" width="14" height="12"><path d="M3.500 .5h10v11h-13v-8z" fill="#d9ecfd" stroke="#55acf2"/><path d="M1 3.500h2.500v-2.500z" fill="#fff"/><path d="M1 6.500h2.700M1 8.500h2.700" stroke="#f01c10" stroke-width="1"/><text x="4.300" y="9.600" font-family="Liberation Sans,sans-serif" font-weight="bold" font-size="8.800" fill="#000" textLength="8.800" lengthAdjust="spacingAndGlyphs">1.2</text></svg>
<div class="tr" id="r17" style="left:83px;top:256px">Верхний порог 2 ТОГ для диагностики</div>
<i class="pm" style="left:28px;top:276px"></i>
<svg class="ti" style="left:44px;top:274px" width="17" height="14"><path d="M.5 11V1.800q0-1.300 1.300-1.300h3.400q1 0 1.600 1l.7 1h5.500q1 0 1 1v1" fill="#f2d35c" stroke="#c49a22" stroke-width="1"/><rect x="1.500" y="3.500" width="14" height="9" rx="1.300" fill="url(#gf)" stroke="#c49a22"/><path d="M2.500 4.500h12" stroke="#fff6c4" stroke-width="1"/></svg>
<div class="tr" id="r18" style="left:63px;top:272px">Датчики и исп. механизмы</div>
<i class="pm" style="left:48px;top:292px"></i>
<svg class="ti" style="left:64px;top:290px" width="17" height="14"><path d="M.5 11V1.800q0-1.300 1.300-1.300h3.400q1 0 1.600 1l.7 1h5.500q1 0 1 1v1" fill="#f2d35c" stroke="#c49a22" stroke-width="1"/><rect x="1.500" y="3.500" width="14" height="9" rx="1.300" fill="url(#gf)" stroke="#c49a22"/><path d="M2.500 4.500h12" stroke="#fff6c4" stroke-width="1"/></svg>
<div class="tr" id="r19" style="left:83px;top:288px">Кондиционер</div>
<svg class="ti" style="left:84px;top:304px" width="16" height="16"><path d="M2.500 1v14M8.500 1v14M11.500 1v14M14.500 1v14M1 3.500h15M1 6.500h15M1 13.500h15" stroke="#d6ccf5" stroke-width="1"/><path d="M5.500 0v16M0 10.500h16" stroke="#26265e" stroke-width="1"/><path d="M2 12.500L5.500 10l2 2L10 8c1-2.500 2-3.500 2.500-1.500L14 11.500" fill="none" stroke="#f01c10" stroke-width="1.300"/></svg>
<div class="tr" id="r20" style="left:103px;top:304px">Порог TPS для отключения кондиционера</div>
<svg class="ti" style="left:84px;top:320px" width="16" height="16"><path d="M2.500 1v14M8.500 1v14M11.500 1v14M14.500 1v14M1 3.500h15M1 6.500h15M1 13.500h15" stroke="#d6ccf5" stroke-width="1"/><path d="M5.500 0v16M0 10.500h16" stroke="#26265e" stroke-width="1"/><path d="M2 12.500L5.500 10l2 2L10 8c1-2.500 2-3.500 2.500-1.500L14 11.500" fill="none" stroke="#f01c10" stroke-width="1.300"/></svg>
<div class="tr" id="r21" style="left:103px;top:320px">Порог TPS для возобновления кондиционера</div>
<svg class="ti" style="left:85px;top:339px" width="14" height="12"><path d="M3.500 .5h10v11h-13v-8z" fill="#d9ecfd" stroke="#55acf2"/><path d="M1 3.500h2.500v-2.500z" fill="#fff"/><path d="M1 6.500h2.700M1 8.500h2.700" stroke="#f01c10" stroke-width="1"/><text x="4.300" y="9.600" font-family="Liberation Sans,sans-serif" font-weight="bold" font-size="8.800" fill="#000" textLength="8.800" lengthAdjust="spacingAndGlyphs">1.2</text></svg>
<div class="tr" id="r22" style="left:103px;top:336px">Верхний порог SPD для запрета отключения</div>
<svg class="ti" style="left:85px;top:355px" width="14" height="12"><path d="M3.500 .5h10v11h-13v-8z" fill="#d9ecfd" stroke="#55acf2"/><path d="M1 3.500h2.500v-2.500z" fill="#fff"/><path d="M1 6.500h2.700M1 8.500h2.700" stroke="#f01c10" stroke-width="1"/><text x="4.300" y="9.600" font-family="Liberation Sans,sans-serif" font-weight="bold" font-size="8.800" fill="#000" textLength="8.800" lengthAdjust="spacingAndGlyphs">1.2</text></svg>
<div class="tr" id="r23" style="left:103px;top:352px">Нижний порог SPD для запрета отключения</div>
<svg class="ti" style="left:85px;top:371px" width="14" height="12"><path d="M3.500 .5h10v11h-13v-8z" fill="#d9ecfd" stroke="#55acf2"/><path d="M1 3.500h2.500v-2.500z" fill="#fff"/><path d="M1 6.500h2.700M1 8.500h2.700" stroke="#f01c10" stroke-width="1"/><text x="4.300" y="9.600" font-family="Liberation Sans,sans-serif" font-weight="bold" font-size="8.800" fill="#000" textLength="8.800" lengthAdjust="spacingAndGlyphs">1.2</text></svg>
<div class="tr" id="r24" style="left:103px;top:368px">Верхний порог SPD для работы вентилятора</div>
<svg class="ti" style="left:85px;top:387px" width="14" height="12"><path d="M3.500 .5h10v11h-13v-8z" fill="#d9ecfd" stroke="#55acf2"/><path d="M1 3.500h2.500v-2.500z" fill="#fff"/><path d="M1 6.500h2.700M1 8.500h2.700" stroke="#f01c10" stroke-width="1"/><text x="4.300" y="9.600" font-family="Liberation Sans,sans-serif" font-weight="bold" font-size="8.800" fill="#000" textLength="8.800" lengthAdjust="spacingAndGlyphs">1.2</text></svg>
<div class="tr" id="r25" style="left:103px;top:384px">Нижний порог SPD для работы вентилятора</div>
<svg class="ti" style="left:85px;top:403px" width="14" height="12"><path d="M3.500 .5h10v11h-13v-8z" fill="#d9ecfd" stroke="#55acf2"/><path d="M1 3.500h2.500v-2.500z" fill="#fff"/><path d="M1 6.500h2.700M1 8.500h2.700" stroke="#f01c10" stroke-width="1"/><text x="4.300" y="9.600" font-family="Liberation Sans,sans-serif" font-weight="bold" font-size="8.800" fill="#000" textLength="8.800" lengthAdjust="spacingAndGlyphs">1.2</text></svg>
<div class="tr" id="r26" style="left:103px;top:400px">Верхний порог ТОЖ для отключения</div>
<svg class="ti" style="left:85px;top:419px" width="14" height="12"><path d="M3.500 .5h10v11h-13v-8z" fill="#d9ecfd" stroke="#55acf2"/><path d="M1 3.500h2.500v-2.500z" fill="#fff"/><path d="M1 6.500h2.700M1 8.500h2.700" stroke="#f01c10" stroke-width="1"/><text x="4.300" y="9.600" font-family="Liberation Sans,sans-serif" font-weight="bold" font-size="8.800" fill="#000" textLength="8.800" lengthAdjust="spacingAndGlyphs">1.2</text></svg>
<div class="tr" id="r27" style="left:103px;top:416px">Нижний порог ТОЖ для отключения</div>
<svg class="ti" style="left:85px;top:435px" width="14" height="12"><path d="M3.500 .5h10v11h-13v-8z" fill="#d9ecfd" stroke="#55acf2"/><path d="M1 3.500h2.500v-2.500z" fill="#fff"/><path d="M1 6.500h2.700M1 8.500h2.700" stroke="#f01c10" stroke-width="1"/><text x="4.300" y="9.600" font-family="Liberation Sans,sans-serif" font-weight="bold" font-size="8.800" fill="#000" textLength="8.800" lengthAdjust="spacingAndGlyphs">1.2</text></svg>
<div class="tr" id="r28" style="left:103px;top:432px">Гистерезис для возобн.после прогрева</div>
<i class="pm" style="left:48px;top:452px"></i>
<svg class="ti" style="left:64px;top:450px" width="17" height="14"><path d="M.5 11V1.800q0-1.300 1.300-1.300h3.400q1 0 1.600 1l.7 1h5.500q1 0 1 1v1" fill="#f2d35c" stroke="#c49a22" stroke-width="1"/><rect x="1.500" y="3.500" width="14" height="9" rx="1.300" fill="url(#gf)" stroke="#c49a22"/><path d="M2.500 4.500h12" stroke="#fff6c4" stroke-width="1"/></svg>
<div class="tr" id="r29" style="left:83px;top:448px">Форсунки</div>
<svg class="ti" style="left:84px;top:464px" width="16" height="16"><path d="M2.500 1v14M8.500 1v14M11.500 1v14M14.500 1v14M1 3.500h15M1 6.500h15M1 13.500h15" stroke="#d6ccf5" stroke-width="1"/><path d="M5.500 0v16M0 10.500h16" stroke="#26265e" stroke-width="1"/><path d="M2 12.500L5.500 10l2 2L10 8c1-2.500 2-3.500 2.500-1.500L14 11.500" fill="none" stroke="#f01c10" stroke-width="1.300"/></svg>
<div class="tr" id="r30" style="left:103px;top:464px">Динамическая производительность</div>
<svg class="ti" style="left:85px;top:483px" width="14" height="12"><path d="M3.500 .5h10v11h-13v-8z" fill="#d9ecfd" stroke="#55acf2"/><path d="M1 3.500h2.500v-2.500z" fill="#fff"/><path d="M1 6.500h2.700M1 8.500h2.700" stroke="#f01c10" stroke-width="1"/><text x="4.300" y="9.600" font-family="Liberation Sans,sans-serif" font-weight="bold" font-size="8.800" fill="#000" textLength="8.800" lengthAdjust="spacingAndGlyphs">1.2</text></svg>
<div class="tr" id="r31" style="left:103px;top:480px">Статическая производительность</div>
</div>
<div id="vtrack" class="a"></div><div id="htrack" class="a"></div><div id="corner" class="a"></div>
<div class="sbtn" style="left:308px;top:145px;height:16px"><svg width="9" height="7" style="position:absolute;left:2px;top:3px"><path d="M1 5.500L4.500 2 8 5.500" fill="none" stroke="#4d6185" stroke-width="2"/></svg></div>
<div class="sbtn" style="left:308px;top:623px;height:17px"><svg width="9" height="7" style="position:absolute;left:2px;top:3px"><path d="M1 1.500L4.500 5 8 1.500" fill="none" stroke="#4d6185" stroke-width="2"/></svg></div>
<div class="thumb" style="left:308px;top:473px;width:15px;height:135px"></div>
<div class="a" style="left:312px;top:536px;width:7px;height:8px;background:repeating-linear-gradient(to bottom,#eef4fe 0 1px,#8ea4d8 1px 2px)"></div>
<div class="sbtn" style="left:33px;top:642px;width:16px"><svg width="7" height="9" style="position:absolute;left:3px;top:2px"><path d="M5.500 1L2 4.500 5.500 8" fill="none" stroke="#4d6185" stroke-width="2"/></svg></div>
<div class="sbtn" style="left:290px;top:642px;width:16px"><svg width="7" height="9" style="position:absolute;left:3px;top:2px"><path d="M1.500 1L5 4.500 1.500 8" fill="none" stroke="#4d6185" stroke-width="2"/></svg></div>
<div class="thumb" style="left:51px;top:642px;width:148px;height:15px"></div>
<div class="a" style="left:121px;top:646px;width:8px;height:7px;background:repeating-linear-gradient(to right,#eef4fe 0 1px,#8ea4d8 1px 2px)"></div>
<div id="search" class="a"></div>
<div class="t" style="left:38px;top:679px;font-size:11px;font-family:'DejaVu Sans Condensed','Liberation Sans',sans-serif">Поиск калибровки</div>
<div class="a" style="left:147px;top:673px;width:173px;height:21px;background:#fff;border:1px solid #7f9db9"></div>
<style>
#pgbg{left:331px;top:95px;width:641px;height:522px;background:#fff}
#pgline{left:331px;top:115px;width:639px;height:1px;background:#919b9c}
#pgleft{left:331px;top:98px;width:1px;height:519px;background:#919b9c}
#pgright{left:969px;top:115px;width:1px;height:503px;background:#919b9c}
#pgright2{left:970px;top:116px;width:2px;height:502px;background:#ece9d8}
#tab1{left:331px;top:95px;width:54px;height:21px;background:#fff;border:1px solid #919b9c;border-bottom:none;border-top:3px solid #f0972a;border-radius:3px 3px 0 0}
#tab2{left:385px;top:97px;width:51px;height:18px;background:linear-gradient(to bottom,#fdfdfb,#efeee5);border:1px solid #919b9c;border-bottom:none;border-left:none;border-radius:0 3px 0 0}
.tabt{font-size:11px;font-family:"DejaVu Sans Condensed","Liberation Sans",sans-serif}
#chart text{font-family:"Liberation Sans",sans-serif}
</style>
<div id="pgbg" class="a"></div><div id="pgline" class="a"></div><div id="pgright" class="a"></div><div id="pgright2" class="a"></div>
<div id="tab2" class="a"></div><div id="tab1" class="a"></div><div id="pgleft" class="a"></div>
<div class="t tabt" style="left:339px;top:99px;letter-spacing:-0.2px">График</div>
<div class="t tabt" style="left:390px;top:101px">Таблица</div>
<svg id="chart" class="a" style="left:332px;top:116px" width="637" height="501" viewBox="332 116 637 501">
<path d="M393 540.5H396" stroke="#555" stroke-width="1"/>
<text x="389.500" y="544.0" text-anchor="end" font-size="11" letter-spacing="-0.2">0</text>
<path d="M395 534.5H396" stroke="#8a8a8a" stroke-width="1"/>
<path d="M395 528.5H396" stroke="#8a8a8a" stroke-width="1"/>
<path d="M395 522.5H396" stroke="#8a8a8a" stroke-width="1"/>
<path d="M395 516.5H396" stroke="#8a8a8a" stroke-width="1"/>
<path d="M398 510.5H958" stroke="#7a7a7a" stroke-width="1" stroke-dasharray="1 1"/>
<path d="M393 510.5H396" stroke="#555" stroke-width="1"/>
<text x="389.500" y="514.0" text-anchor="end" font-size="11" letter-spacing="-0.2">500</text>
<path d="M395 504.5H396" stroke="#8a8a8a" stroke-width="1"/>
<path d="M395 499.5H396" stroke="#8a8a8a" stroke-width="1"/>
<path d="M395 493.5H396" stroke="#8a8a8a" stroke-width="1"/>
<path d="M395 487.5H396" stroke="#8a8a8a" stroke-width="1"/>
<path d="M398 481.5H958" stroke="#7a7a7a" stroke-width="1" stroke-dasharray="1 1"/>
<path d="M393 481.5H396" stroke="#555" stroke-width="1"/>
<text x="389.500" y="485.0" text-anchor="end" font-size="11" letter-spacing="-0.2">1 000</text>
<path d="M395 475.5H396" stroke="#8a8a8a" stroke-width="1"/>
<path d="M395 469.5H396" stroke="#8a8a8a" stroke-width="1"/>
<path d="M395 463.5H396" stroke="#8a8a8a" stroke-width="1"/>
<path d="M395 457.5H396" stroke="#8a8a8a" stroke-width="1"/>
<path d="M398 451.5H958" stroke="#7a7a7a" stroke-width="1" stroke-dasharray="1 1"/>
<path d="M393 451.5H396" stroke="#555" stroke-width="1"/>
<text x="389.500" y="455.0" text-anchor="end" font-size="11" letter-spacing="-0.2">1 500</text>
<path d="M395 445.5H396" stroke="#8a8a8a" stroke-width="1"/>
<path d="M395 439.5H396" stroke="#8a8a8a" stroke-width="1"/>
<path d="M395 433.5H396" stroke="#8a8a8a" stroke-width="1"/>
<path d="M395 427.5H396" stroke="#8a8a8a" stroke-width="1"/>
<path d="M398 422.5H958" stroke="#7a7a7a" stroke-width="1" stroke-dasharray="1 1"/>
<path d="M393 422.5H396" stroke="#555" stroke-width="1"/>
<text x="389.500" y="426.0" text-anchor="end" font-size="11" letter-spacing="-0.2">2 000</text>
<path d="M395 416.5H396" stroke="#8a8a8a" stroke-width="1"/>
<path d="M395 410.5H396" stroke="#8a8a8a" stroke-width="1"/>
<path d="M395 404.5H396" stroke="#8a8a8a" stroke-width="1"/>
<path d="M395 398.5H396" stroke="#8a8a8a" stroke-width="1"/>
<path d="M398 392.5H958" stroke="#7a7a7a" stroke-width="1" stroke-dasharray="1 1"/>
<path d="M393 392.5H396" stroke="#555" stroke-width="1"/>
<text x="389.500" y="396.0" text-anchor="end" font-size="11" letter-spacing="-0.2">2 500</text>
<path d="M395 386.5H396" stroke="#8a8a8a" stroke-width="1"/>
<path d="M395 380.5H396" stroke="#8a8a8a" stroke-width="1"/>
<path d="M395 374.5H396" stroke="#8a8a8a" stroke-width="1"/>
<path d="M395 368.5H396" stroke="#8a8a8a" stroke-width="1"/>
<path d="M398 362.5H958" stroke="#7a7a7a" stroke-width="1" stroke-dasharray="1 1"/>
<path d="M393 362.5H396" stroke="#555" stroke-width="1"/>
<text x="389.500" y="366.0" text-anchor="end" font-size="11" letter-spacing="-0.2">3 000</text>
<path d="M395 356.5H396" stroke="#8a8a8a" stroke-width="1"/>
<path d="M395 350.5H396" stroke="#8a8a8a" stroke-width="1"/>
<path d="M395 345.5H396" stroke="#8a8a8a" stroke-width="1"/>
<path d="M395 339.5H396" stroke="#8a8a8a" stroke-width="1"/>
<path d="M398 333.5H958" stroke="#7a7a7a" stroke-width="1" stroke-dasharray="1 1"/>
<path d="M393 333.5H396" stroke="#555" stroke-width="1"/>
<text x="389.500" y="337.0" text-anchor="end" font-size="11" letter-spacing="-0.2">3 500</text>
<path d="M395 327.5H396" stroke="#8a8a8a" stroke-width="1"/>
<path d="M395 321.5H396" stroke="#8a8a8a" stroke-width="1"/>
<path d="M395 315.5H396" stroke="#8a8a8a" stroke-width="1"/>
<path d="M395 309.5H396" stroke="#8a8a8a" stroke-width="1"/>
<path d="M398 303.5H958" stroke="#7a7a7a" stroke-width="1" stroke-dasharray="1 1"/>
<path d="M393 303.5H396" stroke="#555" stroke-width="1"/>
<text x="389.500" y="307.0" text-anchor="end" font-size="11" letter-spacing="-0.2">4 000</text>
<path d="M395 297.5H396" stroke="#8a8a8a" stroke-width="1"/>
<path d="M395 291.5H396" stroke="#8a8a8a" stroke-width="1"/>
<path d="M395 285.5H396" stroke="#8a8a8a" stroke-width="1"/>
<path d="M395 279.5H396" stroke="#8a8a8a" stroke-width="1"/>
<path d="M398 273.5H958" stroke="#7a7a7a" stroke-width="1" stroke-dasharray="1 1"/>
<path d="M393 273.5H396" stroke="#555" stroke-width="1"/>
<text x="389.500" y="277.0" text-anchor="end" font-size="11" letter-spacing="-0.2">4 500</text>
<path d="M395 268.5H396" stroke="#8a8a8a" stroke-width="1"/>
<path d="M395 262.5H396" stroke="#8a8a8a" stroke-width="1"/>
<path d="M395 256.5H396" stroke="#8a8a8a" stroke-width="1"/>
<path d="M395 250.5H396" stroke="#8a8a8a" stroke-width="1"/>
<path d="M398 244.5H958" stroke="#7a7a7a" stroke-width="1" stroke-dasharray="1 1"/>
<path d="M393 244.5H396" stroke="#555" stroke-width="1"/>
<text x="389.500" y="248.0" text-anchor="end" font-size="11" letter-spacing="-0.2">5 000</text>
<path d="M395 238.5H396" stroke="#8a8a8a" stroke-width="1"/>
<path d="M395 232.5H396" stroke="#8a8a8a" stroke-width="1"/>
<path d="M395 226.5H396" stroke="#8a8a8a" stroke-width="1"/>
<path d="M395 220.5H396" stroke="#8a8a8a" stroke-width="1"/>
<path d="M398 214.5H958" stroke="#7a7a7a" stroke-width="1" stroke-dasharray="1 1"/>
<path d="M393 214.5H396" stroke="#555" stroke-width="1"/>
<text x="389.500" y="218.0" text-anchor="end" font-size="11" letter-spacing="-0.2">5 500</text>
<path d="M395 208.5H396" stroke="#8a8a8a" stroke-width="1"/>
<path d="M395 202.5H396" stroke="#8a8a8a" stroke-width="1"/>
<path d="M395 196.5H396" stroke="#8a8a8a" stroke-width="1"/>
<path d="M395 191.5H396" stroke="#8a8a8a" stroke-width="1"/>
<path d="M398 185.5H958" stroke="#7a7a7a" stroke-width="1" stroke-dasharray="1 1"/>
<path d="M393 185.5H396" stroke="#555" stroke-width="1"/>
<text x="389.500" y="189.0" text-anchor="end" font-size="11" letter-spacing="-0.2">6 000</text>
<path d="M395 179.5H396" stroke="#8a8a8a" stroke-width="1"/>
<path d="M395 173.5H396" stroke="#8a8a8a" stroke-width="1"/>
<path d="M395 167.5H396" stroke="#8a8a8a" stroke-width="1"/>
<path d="M395 161.5H396" stroke="#8a8a8a" stroke-width="1"/>
<path d="M398 155.5H958" stroke="#7a7a7a" stroke-width="1" stroke-dasharray="1 1"/>
<path d="M393 155.5H396" stroke="#555" stroke-width="1"/>
<text x="389.500" y="159.0" text-anchor="end" font-size="11" letter-spacing="-0.2">6 500</text>
<path d="M397.5 541V544.500" stroke="#444" stroke-width="1"/>
<path d="M434.5 541V542.500" stroke="#555" stroke-width="1"/>
<path d="M472.5 541V542.500" stroke="#555" stroke-width="1"/>
<path d="M509.5 541V542.500" stroke="#555" stroke-width="1"/>
<path d="M547.5 541V542.500" stroke="#555" stroke-width="1"/>
<path d="M584.5 153V539" stroke="#7a7a7a" stroke-width="1" stroke-dasharray="1 1"/>
<path d="M584.5 541V544.500" stroke="#444" stroke-width="1"/>
<path d="M621.5 541V542.500" stroke="#555" stroke-width="1"/>
<path d="M659.5 541V542.500" stroke="#555" stroke-width="1"/>
<path d="M696.5 541V542.500" stroke="#555" stroke-width="1"/>
<path d="M734.5 541V542.500" stroke="#555" stroke-width="1"/>
<path d="M771.5 153V539" stroke="#7a7a7a" stroke-width="1" stroke-dasharray="1 1"/>
<path d="M771.5 541V544.500" stroke="#444" stroke-width="1"/>
<path d="M808.5 541V542.500" stroke="#555" stroke-width="1"/>
<path d="M846.5 541V542.500" stroke="#555" stroke-width="1"/>
<path d="M883.5 541V542.500" stroke="#555" stroke-width="1"/>
<path d="M921.5 541V542.500" stroke="#555" stroke-width="1"/>
<path d="M958.5 541V544.500" stroke="#444" stroke-width="1"/>
<path d="M396 152.500H958.500V540" fill="none" stroke="#000" stroke-width="1"/>
<path d="M397 152V540H959" fill="none" stroke="#000" stroke-width="2"/>
<clipPath id="cp"><rect x="398" y="153" width="560" height="387"/></clipPath>
<polyline points="397.5,212.5 584.5,464.2 771.5,509.7 958.5,540.0" fill="none" stroke="#1438d8" stroke-width="1.100"/>
<rect x="393.5" y="208.5" width="8" height="8" fill="#1238cc" stroke="#000" stroke-width="1" clip-path="url(#cp)"/>
<rect x="580.5" y="460.2" width="8" height="8" fill="#1238cc" stroke="#000" stroke-width="1" clip-path="url(#cp)"/>
<rect x="767.5" y="505.7" width="8" height="8" fill="#1238cc" stroke="#000" stroke-width="1" clip-path="url(#cp)"/>
<rect x="954.5" y="536.0" width="8" height="8" fill="#1238cc" stroke="#000" stroke-width="1" clip-path="url(#cp)"/>
<text x="397.5" y="202.2" text-anchor="middle" font-size="9.200" fill="#7a0000">5529,6</text>
<text x="584.5" y="453.9" text-anchor="middle" font-size="9.200" fill="#7a0000">1280,0</text>
<text x="771.5" y="499.4" text-anchor="middle" font-size="9.200" fill="#7a0000">512,0</text>
<text x="958.5" y="529.7" text-anchor="middle" font-size="9.200" fill="#7a0000">0,0</text>
<text transform="translate(400.8,548) rotate(-90)" text-anchor="end" font-size="11">-45</text>
<text transform="translate(587.8,548) rotate(-90)" text-anchor="end" font-size="11">-30</text>
<text transform="translate(774.8,548) rotate(-90)" text-anchor="end" font-size="11">-9,75</text>
<text transform="translate(961.8,548) rotate(-90)" text-anchor="end" font-size="11">21</text>
<text id="ctitle" x="651" y="141.800" text-anchor="middle" font-size="12" font-weight="bold">Задержка регулирования после пуска</text>
<text id="xtitle" x="677" y="599.800" text-anchor="middle" font-size="12" font-weight="bold" letter-spacing="-0.15">Темп.ОЖ при пуске, град.С</text>
<text id="ytitle" transform="translate(357,347) rotate(-90)" text-anchor="middle" font-size="12" font-weight="bold">сек.</text>
<path d="M515.500 587.500v16l4-3.800 3.600 8 2.500-1-3.600-8h5z" fill="#fff" stroke="#000" stroke-width="1" stroke-linejoin="miter"/>
</svg>
<style>
#bpanel{left:332px;top:617px;width:636px;height:87px;background:linear-gradient(to bottom,#d9e7fb 0%,#c3d6f6 25%,#a9c3ee 60%,#96b3e6 100%)}
.gb{position:absolute;top:620px;height:77px;border:1px solid #a9a89e;box-shadow:1px 1px 0 #eef3fc,inset 1px 1px 0 #eef3fc}
.bt{font-size:11px;font-family:"DejaVu Sans Condensed","Liberation Sans",sans-serif;letter-spacing:-0.1px}
.gbtn{position:absolute;width:14px;height:14px;border-radius:2px;background:linear-gradient(to bottom,#58b850 0%,#2f9a2b 50%,#1a7d1a 100%);border:1px solid #3f9a3a}
.cb{position:absolute;width:13px;height:13px;border:1px solid #1c5180;background:linear-gradient(135deg,#dcdcd7 0%,#f3f3ef 50%,#fff 100%)}
.spin{position:absolute;left:439px;width:64px;height:22px;background:#fff;border:1px solid #7f9db9}
.spb{position:absolute;left:486px;width:13px;height:14px;background:#c3d3f8;border-radius:1px}
.sl{position:absolute;left:523px;width:81px;height:12px;background:#efede4;border-top:1px solid #a9a79a;border-bottom:1px solid #fff;border-right:1px solid #fff}
#sbar{left:4px;top:706px;width:968px;height:18px;background:linear-gradient(to bottom,#b5d0f8 0%,#a8c6f4 18%,#8fb0e8 32%,#82a8e0 45%,#82a8e0 78%,#8fb4e6 92%,#c4c8c6 100%)}
.sbs{position:absolute;top:707px;width:1px;height:16px;background:#6d8fd0;box-shadow:1px 0 0 #c9dcf8}
.st{font-size:11px;font-family:"DejaVu Sans Condensed","Liberation Sans",sans-serif;top:710px;letter-spacing:-0.15px}
.xb{position:absolute;left:898px;width:20px;height:20px;border-radius:3px;text-align:center;font-size:11px;line-height:18px;font-family:"Liberation Sans",sans-serif}
</style>
<div id="bpanel" class="a"></div><div class="a" style="left:968px;top:617px;width:4px;height:88px;background:linear-gradient(to right,#fff 0,#fff 1px,#ece9d8 1px)"></div>
<div class="a" style="left:4px;top:705px;width:968px;height:1px;background:#ddd8c4"></div>
<div class="gb" style="left:338px;width:172px"></div>
<div class="gb" style="left:514px;width:187px"></div>
<div class="gb" style="left:705px;width:182px"></div>
<div class="gb" style="left:891px;width:34px"></div>
<!-- group 1 -->
<div class="gbtn" style="left:343px;top:628px"><svg width="12" height="12" style="position:absolute;left:0;top:0"><path d="M2 6h7M6 2.500L9.500 6 6 9.500" fill="none" stroke="#fff" stroke-width="1.800"/></svg></div>
<div class="gbtn" style="left:343px;top:651px"><svg width="12" height="12" style="position:absolute;left:0;top:0"><path d="M2 6h7M6 2.500L9.500 6 6 9.500" fill="none" stroke="#fff" stroke-width="1.800"/></svg></div>
<div class="t bt" style="left:359px;top:630px">Установить в</div>
<div class="t bt" style="left:359px;top:653px;letter-spacing:-0.4px">Изменить на</div>
<div class="cb" style="left:344px;top:674px"></div><div class="t bt" style="left:360px;top:677px;font-size:9.500px;letter-spacing:-0.5px">%</div>
<div class="cb" style="left:372px;top:674px"></div><div class="t bt" style="left:390px;top:676px;letter-spacing:-0.5px">относит.</div>
<div class="spin" style="top:625px"></div><div class="spin" style="top:647px"></div><div class="spin" style="top:669px"></div>
<div class="a" style="left:442px;top:626px;width:42px;height:19px;overflow:hidden"><div class="t bt" style="left:0;top:4px">6800,000</div></div>
<div class="t bt" style="left:442px;top:652px">0,000</div>
<div class="t bt" style="left:442px;top:674px">0,000</div>
<div class="spb" style="top:628px"><svg width="13" height="14"><path d="M3.500 6L6.500 3l3 3M3.500 8.500l3 3 3-3" fill="none" stroke="#44588a" stroke-width="2"/></svg></div>
<div class="spb" style="top:650px"><svg width="13" height="14"><path d="M3.500 6L6.500 3l3 3M3.500 8.500l3 3 3-3" fill="none" stroke="#44588a" stroke-width="2"/></svg></div>
<div class="spb" style="top:672px"><svg width="13" height="14"><path d="M3.500 6L6.500 3l3 3M3.500 8.500l3 3 3-3" fill="none" stroke="#44588a" stroke-width="2"/></svg></div>
<!-- group 2 sliders -->
<div class="sl" style="top:637px"></div><div class="sl" style="top:665px"></div>
<svg class="a" style="left:522px;top:635px" width="10" height="17"><path d="M1 1.500h7.500v10L4.750 16 1 11.500z" fill="#f1f1ec" stroke="#8a9a8a" stroke-width="1"/><path d="M1 1.500h7.500" stroke="#30b030" stroke-width="1.600"/><path d="M1.500 12L4.750 16 8 12" fill="none" stroke="#30b030" stroke-width="1.300"/></svg>
<svg class="a" style="left:522px;top:663px" width="10" height="17"><path d="M1 1.500h7.500v10L4.750 16 1 11.500z" fill="#f1f1ec" stroke="#8a9a8a" stroke-width="1"/><path d="M1 1.500h7.500" stroke="#30b030" stroke-width="1.600"/><path d="M1.500 12L4.750 16 8 12" fill="none" stroke="#30b030" stroke-width="1.300"/></svg>
<div class="a" style="left:612px;top:625px;width:84px;height:69px;border:1px solid #16386f;border-radius:4px;background:linear-gradient(to bottom,#fff,#f1efe6 80%,#dcd9cb);box-shadow:inset 0 0 0 1px #fff,inset -1px -1px 0 1px #c9c5b4"></div>
<svg class="a" style="left:618px;top:631px" width="72" height="57" viewBox="0 0 72 57">
<rect x=".5" y=".5" width="70" height="55" fill="#fff"/>
<path d="M.5 .5v55M7.500 .5v55M14.500 .5v55M21.500 .5v55M28.500 .5v55M35.500 .5v55M42.500 .5v55M49.500 .5v55M56.500 .5v55M63.500 .5v55M70.500 .5v55M0 .5h71M0 8.500h71M0 16.500h71M0 24.500h71M0 32.500h71M0 40.500h71M0 47.500h71M0 55.500h71" stroke="#6e6e6e" stroke-width="1"/>
<path d="M4 4L66 52.500" stroke="#1438d8" stroke-width="1.100"/><path d="M4 52.500L66 5" stroke="#e01818" stroke-width="1.100"/>
</svg>
<!-- group 3 -->
<div class="cb" style="left:712px;top:630px;width:12px;height:12px;border-color:#c9c7ba;background:#fff"><svg width="10" height="10"><path d="M2 4.500l2.200 2.500L8 2.500" fill="none" stroke="#b5b3a6" stroke-width="1.600"/></svg></div>
<div class="cb" style="left:712px;top:646px;width:12px;height:12px;border-color:#d4d2c6;background:#fff"></div>
<div class="cb" style="left:712px;top:662px;width:12px;height:12px;border-color:#d4d2c6;background:#fff"></div>
<div class="cb" style="left:712px;top:679px;width:12px;height:12px;border-color:#d4d2c6;background:#f1efe6"></div>
<div class="t bt" style="left:730px;top:631px;letter-spacing:-0.22px">2D - отображать все точки</div>
<div class="t bt" style="left:730px;top:647px">3D - следить за мышью</div>
<div class="t bt" style="left:730px;top:663px">3D - изм. соседние точки</div>
<div class="t bt" style="left:730px;top:680px;color:#f4f7fd;text-shadow:-1px -1px 0 #9db0d6">2D - отменить ZOOM</div>
<svg class="a" style="left:865px;top:662px" width="18" height="16"><rect width="18" height="16" fill="#1d4fc4"/><rect x="17" width="1" height="16" fill="#6b6b6b"/><path d="M2 2h3v3H2zM6 2h3v3H6zM10 2h3v3h-3zM14 2h2.500v3H14zM2 6h3v3H2zM6 6h3v3H6zM10 6h3v3h-3zM14 6h2.500v3H14zM2 10h3v3H2zM6 10h3v3H6zM10 10h3v3h-3zM14 10h2.500v3H14z" fill="#fff"/></svg>
<!-- group 4 -->
<div class="xb" style="top:634px;border:1px solid #16386f;background:linear-gradient(to bottom,#fff,#f1efe6 80%,#dcd9cb);color:#000">X</div>
<div class="xb" style="top:666px;border:1px solid #c9c7ba;background:#f3f1e8;color:#aaa89c">Z</div>
<div class="a" style="left:332px;top:701px;width:640px;height:1px;background:#fff"></div><div class="a" style="left:332px;top:702px;width:640px;height:1px;background:#8a9a9a"></div><div class="a" style="left:332px;top:703px;width:640px;height:3px;background:#e0dcc8"></div>
<!-- status bar -->
<div id="sbar" class="a"></div>
<div class="t st" style="left:9px">Bosch M7.9.8</div>
<div class="sbs" style="left:157px"></div>
<div class="t st" style="left:163px">неизв. ПО</div>
<div class="sbs" style="left:308px"></div>
<div class="a" style="left:312px;top:707px;width:44px;height:14px;background:linear-gradient(to right,rgba(200,245,200,.7) 0%,rgba(200,245,200,0) 6%,rgba(200,245,200,0) 94%,rgba(200,245,200,.7) 100%),linear-gradient(to bottom,#c0f7c0 0%,#48f048 28%,#0de80d 55%,#5cec5c 80%,#b0f4b0 100%)"></div>
<div class="t st" style="left:320px">100%</div>
<div class="sbs" style="left:358px"></div>
<div class="t st" style="left:364px">Y=-793,852</div>
<svg class="a" style="left:958px;top:711px" width="12" height="12"><g fill="#c9daf7"><rect x="8" y="0" width="2" height="2"/><rect x="4" y="4" width="2" height="2"/><rect x="8" y="4" width="2" height="2"/><rect x="0" y="8" width="2" height="2"/><rect x="4" y="8" width="2" height="2"/><rect x="8" y="8" width="2" height="2"/></g><g fill="#6f8fcf"><rect x="9" y="1" width="2" height="2"/><rect x="5" y="5" width="2" height="2"/><rect x="9" y="5" width="2" height="2"/><rect x="1" y="9" width="2" height="2"/><rect x="5" y="9" width="2" height="2"/><rect x="9" y="9" width="2" height="2"/></g></svg>
</body></html>
